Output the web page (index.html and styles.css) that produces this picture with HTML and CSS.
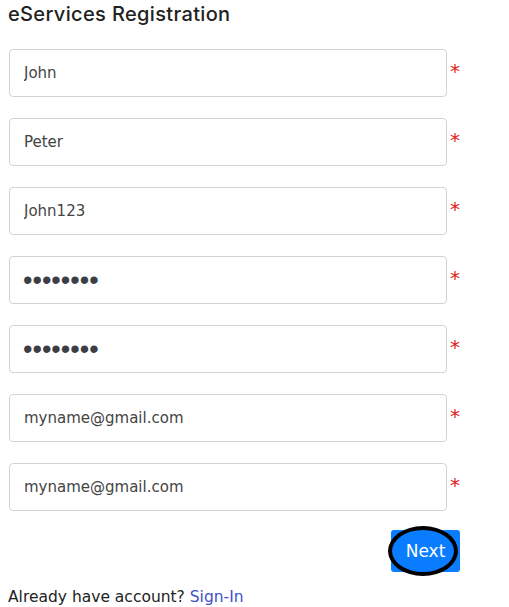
FILE: index.html
```html
<!DOCTYPE html>
<html lang="en">
<head>
  <meta charset="UTF-8" />
  <title>eServices Registration</title>
  <link rel="stylesheet" href="styles.css">
</head>
<body>
  <div class="register">
    <h2 class="title">eServices Registration</h2>

    <form class="form">
      <div class="row">
        <input class="field" type="text" value="John">
        <span class="req">*</span>
      </div>
      <div class="row">
        <input class="field" type="text" value="Peter">
        <span class="req">*</span>
      </div>
      <div class="row">
        <input class="field" type="text" value="John123">
        <span class="req">*</span>
      </div>
      <div class="row">
        <input class="field" type="password" value="password">
        <span class="req">*</span>
      </div>
      <div class="row">
        <input class="field" type="password" value="password">
        <span class="req">*</span>
      </div>
      <div class="row">
        <input class="field" type="email" value="myname@gmail.com">
        <span class="req">*</span>
      </div>
      <div class="row">
        <input class="field" type="email" value="myname@gmail.com">
        <span class="req">*</span>
      </div>

      <div class="actions">
        <button class="btn-next" type="button">Next</button>
      </div>
    </form>

    <p class="signin">Already have account? <a href="#">Sign-In</a></p>
  </div>
</body>
</html>
```

FILE: styles.css
```css
body {
  margin: 0;
  padding: 0 8px;
  font-family: 'DejaVu Sans', sans-serif;
  background-color: #fff;
  color: #222;
}

.register {
  width: 452px;
}

.title {
  margin: 0;
  padding-top: 2px;
  font-family: 'Inter', sans-serif;
  font-size: 20px;
  font-weight: 500;
  color: #222;
  letter-spacing: 0.35px;
  height: 47px;
}

.form {
  display: flex;
  flex-direction: column;
  gap: 21px;
}

.row {
  display: flex;
  align-items: center;
}

.field {
  box-sizing: border-box;
  width: 438px;
  height: 48px;
  margin-left: 1px;
  padding: 0 14px;
  border: 1px solid #d3d3d3;
  border-radius: 4px;
  font-family: 'DejaVu Sans', sans-serif;
  font-size: 15px;
  color: #444;
  background: #fff;
}

.field[type="password"] {
  font-family: 'Liberation Sans', sans-serif;
  font-size: 27px;
  color: #3d3d46;
  padding-left: 13px;
}

.req {
  margin-left: 3px;
  color: #e02020;
  font-size: 20px;
  line-height: 1;
  margin-top: -4px;
}

.actions {
  display: flex;
  justify-content: flex-end;
  margin-top: -2px;
}

.btn-next {
  position: relative;
  width: 69px;
  height: 42px;
  border: none;
  border-radius: 3px;
  background: #0a7cff;
  color: #fff;
  font-family: 'DejaVu Sans', sans-serif;
  font-size: 17px;
}

.btn-next::after {
  content: "";
  position: absolute;
  left: -3px;
  top: -4px;
  width: 70px;
  height: 50px;
  box-sizing: border-box;
  border: 4px solid #000;
  border-radius: 50%;
}

.signin {
  margin: 16px 0 0;
  font-size: 15.5px;
  color: #222;
}

.signin a {
  color: #3f51c8;
  text-decoration: none;
}
```
